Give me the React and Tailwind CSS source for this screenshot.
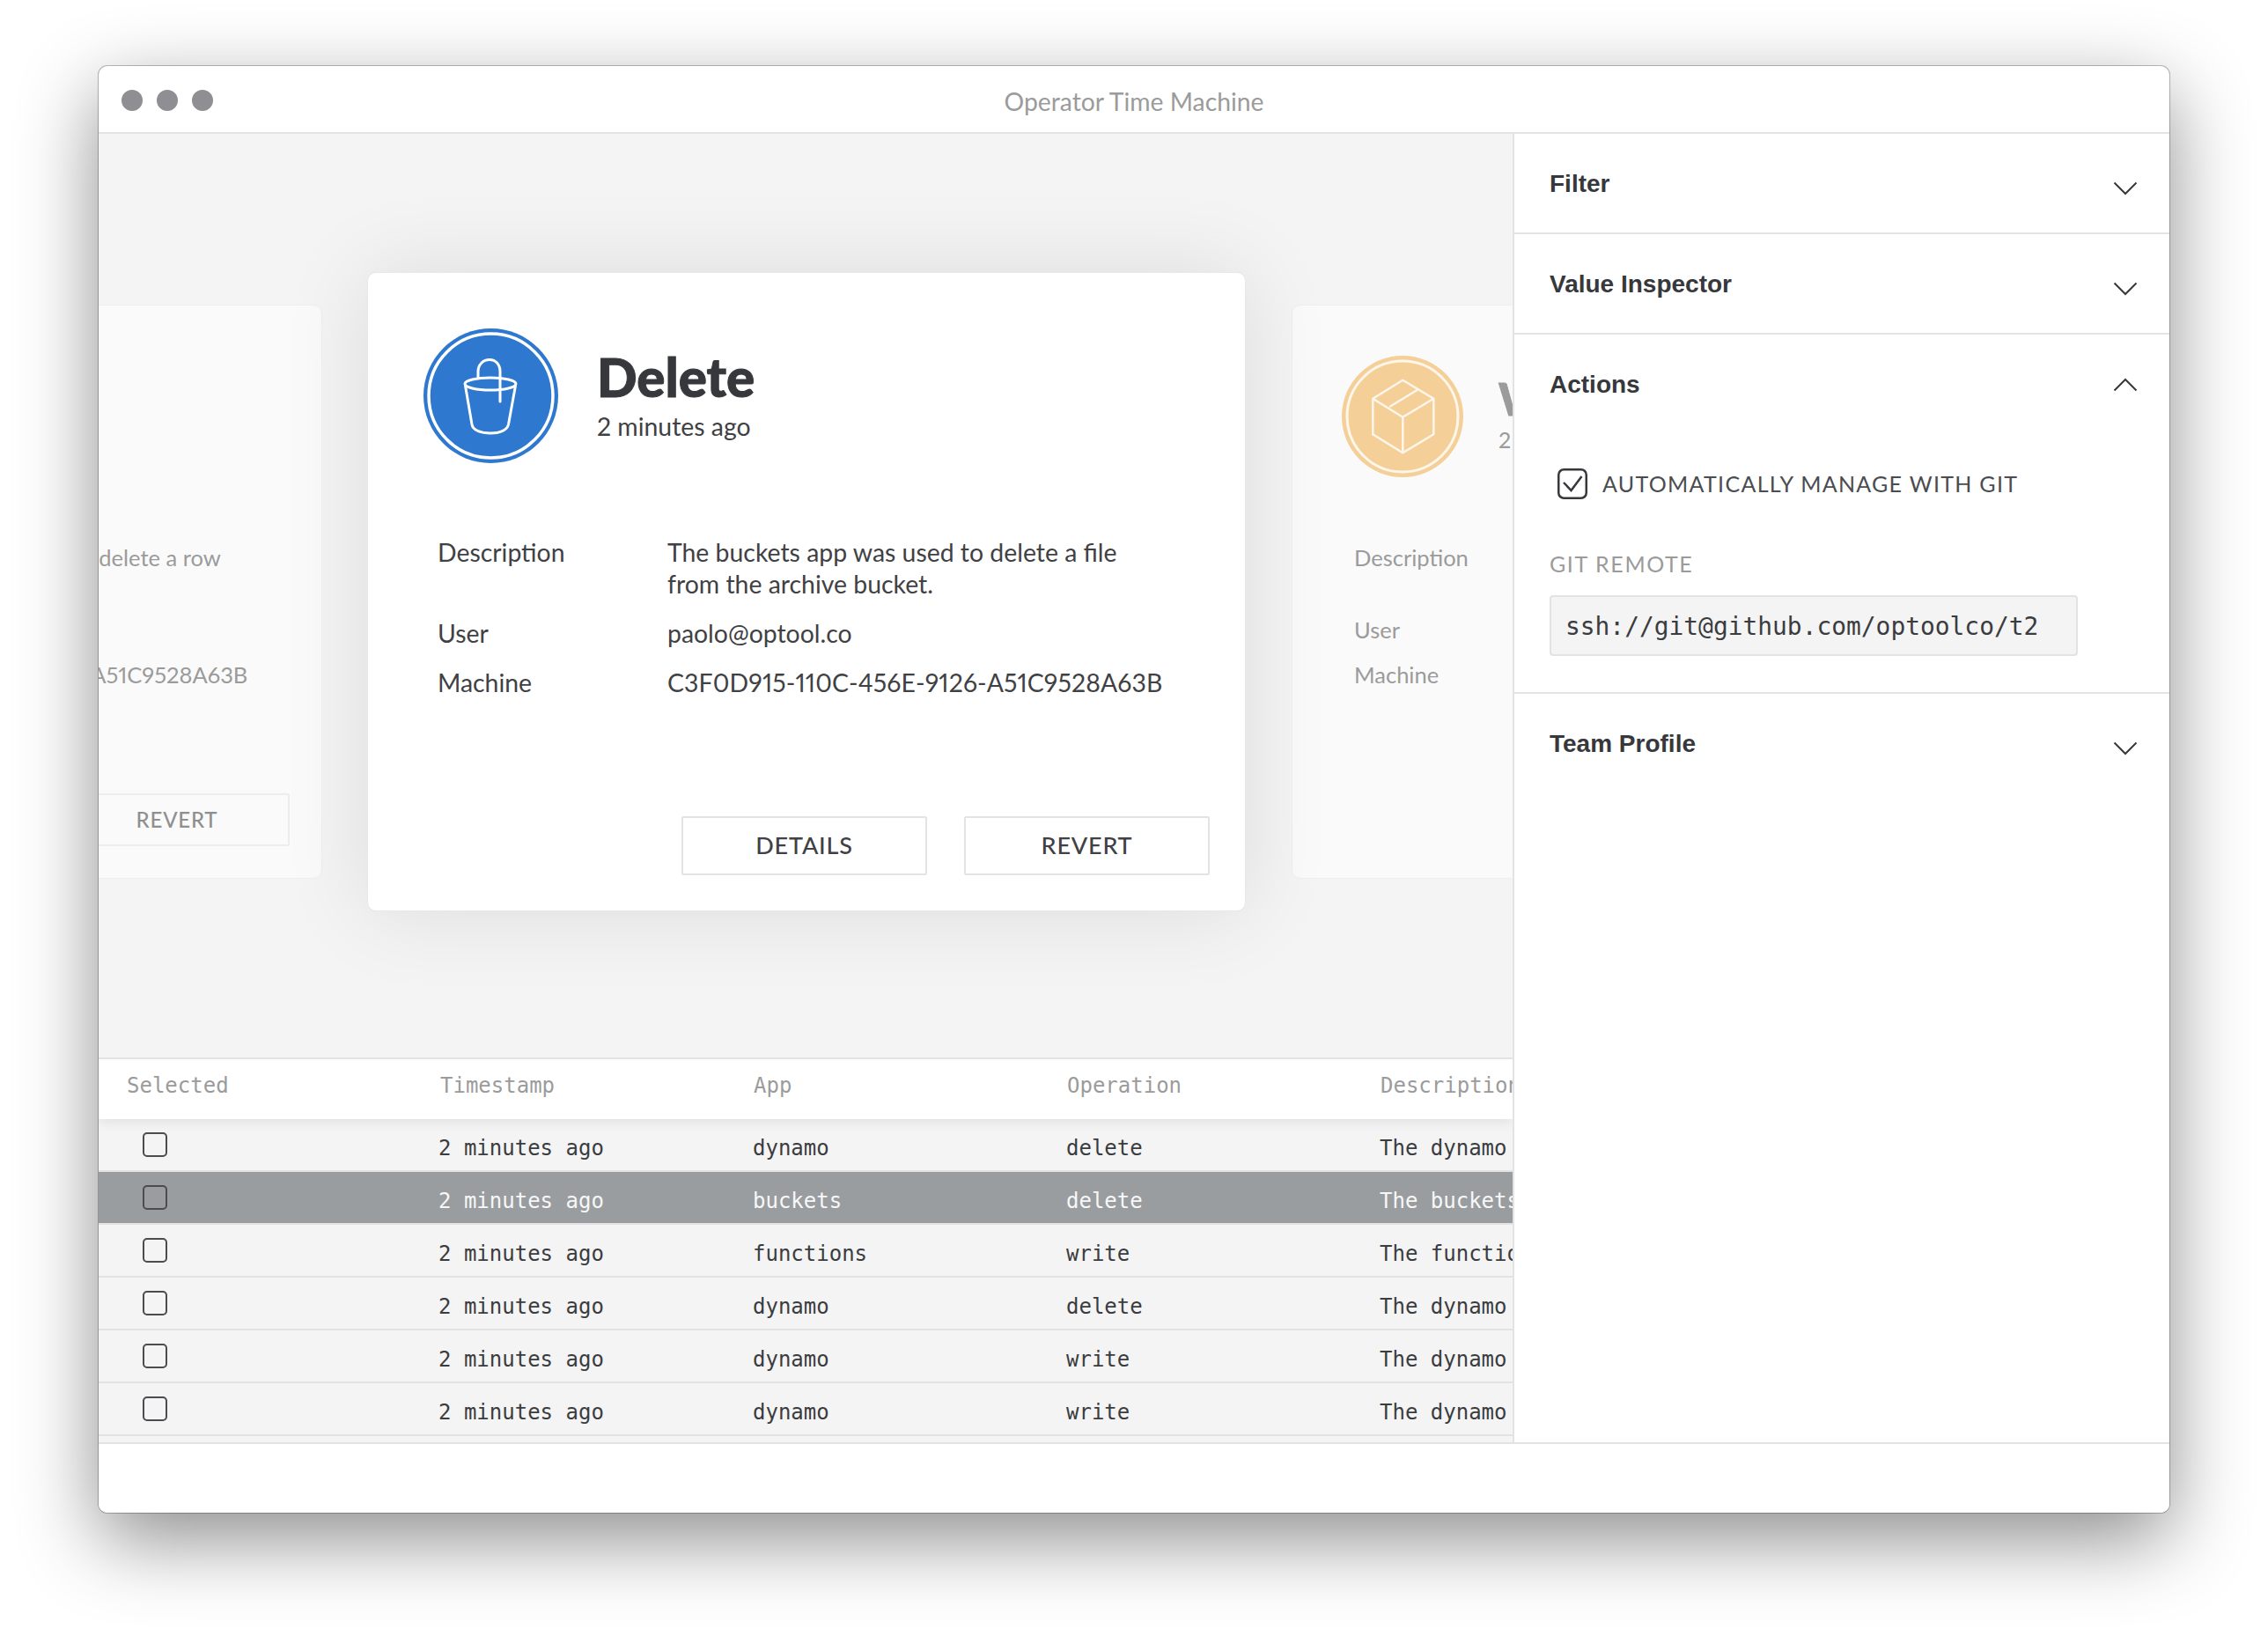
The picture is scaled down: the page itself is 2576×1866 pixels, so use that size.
import React from "react";

const rows = [
  { app: "dynamo", op: "delete", desc: "The dynamo app was used to delete a row" },
  { app: "buckets", op: "delete", desc: "The buckets app was used to delete a file", selected: true },
  { app: "functions", op: "write", desc: "The functions app was used to write a file" },
  { app: "dynamo", op: "delete", desc: "The dynamo app was used to delete a row" },
  { app: "dynamo", op: "write", desc: "The dynamo app was used to write a row" },
  { app: "dynamo", op: "write", desc: "The dynamo app was used to write a row" },
];

function BucketIcon() {
  return (
    <svg width="153" height="153" viewBox="0 0 153 153" fill="none" className="shrink-0">
      <circle cx="76.5" cy="76.5" r="76.5" fill="#2e78d0" />
      <g stroke="#fff" strokeWidth="3" strokeLinecap="round" strokeLinejoin="round">
        <circle cx="76.5" cy="76.5" r="70.5" strokeWidth="3.5" />
        <ellipse cx="76" cy="63" rx="29" ry="7" />
        <path d="M47.5 65 L55 109 C56 116 66 119 76 119 C86 119 95 116 96.5 109 L104.5 65" />
        <path d="M62 56 V49 C62 41 68 35.5 75 35.5 C82 35.5 87 41 87 49 V83" />
      </g>
    </svg>
  );
}

function BoxIcon() {
  return (
    <svg width="138" height="138" viewBox="0 0 138 138" fill="none" className="shrink-0">
      <circle cx="69" cy="69" r="69" fill="#f5cf98" />
      <g stroke="#fdf6ea" strokeWidth="2.5" strokeLinejoin="round">
        <circle cx="69" cy="69" r="63" strokeWidth="3" />
        <path d="M69.3 27.7 L104.3 48.7 V89.3 L69.3 110.3 L35.3 89.3 V48.7 Z" />
        <path d="M35.3 48.7 L69.3 69.7 L104.3 48.7 M69.3 69.7 V110.3 M54.3 58 L86 38.7" />
      </g>
    </svg>
  );
}

function Chevron({ up }) {
  return (
    <svg width="28" height="16" viewBox="0 0 28 16" fill="none" className={up ? "shrink-0" : "shrink-0 mt-[10px]"}>
      <path d={up ? "M1.5 14.5 L14 2 L26.5 14.5" : "M1.5 1.5 L14 14 L26.5 1.5"} stroke="#36383c" strokeWidth="2" />
    </svg>
  );
}

function SideCard({ icon, title, desc, cols, button }) {
  return (
    <div className="w-[854px] h-[652px] shrink-0 bg-[#fafafa] rounded-[10px] border border-[#efefef] pl-[56px] pt-[57px] pr-[36px] flex flex-col font-['Lato',sans-serif] text-[#9b9b9b] proportional-nums">
      <div className="flex items-center gap-[40px]">
        {icon}
        <div className="flex flex-col mt-[-8px]">
          <span className="text-[51px] leading-[60px] font-black [-webkit-text-stroke:1px_#9b9b9b]">{title}</span>
          <span className="text-[25px] leading-[32px]">2 minutes ago</span>
        </div>
      </div>
      <div className={"grid ml-[14px] mt-[76px] text-[25.5px] leading-[31px] gap-y-[20px] " + cols}>
        <span>Description</span>
        <span className="whitespace-pre">{desc}</span>
        <span>User</span>
        <span>paolo@optool.co</span>
        <span>Machine</span>
        <span className="whitespace-nowrap">C3F0D915-110C-456E-9126-A51C9528A63B</span>
      </div>
      {button && (
        <div className="mt-auto mb-[36px] flex justify-end">
          <div className="w-[256px] h-[60px] border-2 border-[#ededed] rounded-[2px] flex items-center justify-center text-[24px] tracking-[0.8px] font-medium text-[#8f8f8f]">
            {button}
          </div>
        </div>
      )}
    </div>
  );
}

function Section({ title, last }) {
  return (
    <div className={last ? "h-[114px] shrink-0 pl-[40px] pr-[36px] flex items-center justify-between" : "h-[114px] shrink-0 pl-[40px] pr-[36px] pt-[2px] flex items-center justify-between border-b-2 border-[#e3e3e3]"}>
      <span className="text-[28px] font-bold text-[#36383c] font-['Liberation_Sans',sans-serif]">{title}</span>
      <Chevron />
    </div>
  );
}

export default function App() {
  return (
    <div className="min-h-screen bg-white pt-[75px] pl-[112px]">
      <div className="w-[2352px] h-[1643px] bg-white rounded-[10px] overflow-hidden flex flex-col shadow-[0_30px_90px_rgba(0,0,0,0.45),0_0_0_1px_rgba(0,0,0,0.25)]">
        {/* title bar */}
        <div className="h-[77px] shrink-0 relative flex items-center justify-center border-b-2 border-[#e3e3e3]">
          <div className="absolute left-[26px] top-[27px] flex gap-[16px]">
            <div className="w-[24px] h-[24px] rounded-full bg-[#8e8e93]"></div>
            <div className="w-[24px] h-[24px] rounded-full bg-[#8e8e93]"></div>
            <div className="w-[24px] h-[24px] rounded-full bg-[#8e8e93]"></div>
          </div>
          <span className="text-[28.3px] text-[#9b9b9b] font-['Lato',sans-serif] mt-[5px]">Operator Time Machine</span>
        </div>

        <div className="flex-1 flex min-h-0">
          {/* main column */}
          <div className="flex-1 min-w-0 flex flex-col bg-[#f4f4f4]">
            <div className="h-[1049px] shrink-0 overflow-hidden flex items-center justify-center pb-[9px] pl-[3px]">
              <SideCard
                icon={<BoxIcon />}
                title="Write"
                desc={"The dynamo app was used to delete a row\nin the table."}
                cols="grid-cols-[197px_1fr]"
                button="REVERT"
              />
              <div className="relative z-10 w-[998px] h-[726px] shrink-0 ml-[51px] mr-[52px] bg-white rounded-[10px] border border-[#e8e8e8] shadow-[0_0_100px_rgba(0,0,0,0.1)] p-[40px] pt-[63px] flex flex-col font-['Lato',sans-serif] text-[#3f4144] proportional-nums">
                <div className="flex items-center gap-[44px] pl-[23px]">
                  <BucketIcon />
                  <div className="flex flex-col mt-[-6px]">
                    <span className="text-[60px] leading-[72px] font-black text-[#36383c] [-webkit-text-stroke:1px_#36383c]">Delete</span>
                    <span className="text-[28.4px] leading-[36px] mt-[2px]">2 minutes ago</span>
                  </div>
                </div>
                <div className="grid grid-cols-[261px_1fr] ml-[39px] mt-[83px] text-[28.4px] leading-[36px] gap-y-[20px]">
                  <span>Description</span>
                  <span>
                    The buckets app was used to delete a file
                    <br />
                    from the archive bucket.
                  </span>
                  <span>User</span>
                  <span>paolo@optool.co</span>
                  <span>Machine</span>
                  <span className="whitespace-nowrap tracking-[0.12px]">C3F0D915-110C-456E-9126-A51C9528A63B</span>
                </div>
                <div className="mt-auto flex justify-end gap-[42px]">
                  <div className="w-[279px] h-[67px] border-2 border-[#e3e3e3] rounded-[2px] flex items-center justify-center text-[27px] tracking-[0.8px] font-medium">DETAILS</div>
                  <div className="w-[279px] h-[67px] border-2 border-[#e3e3e3] rounded-[2px] flex items-center justify-center text-[27px] tracking-[0.8px] font-medium">REVERT</div>
                </div>
              </div>
              <SideCard
                icon={<BoxIcon />}
                title="Write"
                desc={"The dynamo app was used to write a row\nin the table."}
                cols="grid-cols-[223px_1fr]"
              />
            </div>

            {/* table */}
            <div className="flex-1 min-h-0 overflow-hidden font-['DejaVu_Sans_Mono',monospace] text-[24px]">
              <div className="h-[70px] bg-white border-t-2 border-[#e3e3e3] flex items-center pb-[9px] pl-[32px] text-[#9b9b9b] relative shadow-[0_4px_12px_rgba(0,0,0,0.08)] whitespace-nowrap">
                <span className="w-[356px] shrink-0">Selected</span>
                <span className="w-[356px] shrink-0">Timestamp</span>
                <span className="w-[356px] shrink-0">App</span>
                <span className="w-[356px] shrink-0">Operation</span>
                <span className="w-[356px] shrink-0">Description</span>
              </div>
              {rows.map((row, i) => (
                <div
                  key={i}
                  className={
                    row.selected
                      ? "h-[60px] flex items-center pl-[50px] pt-[8px] bg-[#9a9d9f] text-[#f7f7f7] border-b-2 border-[#e3e3e3] whitespace-nowrap"
                      : "h-[60px] flex items-center pl-[50px] pt-[8px] text-[#3a3c40] border-b-2 border-[#e3e3e3] whitespace-nowrap"
                  }
                >
                  <div className="w-[336px] shrink-0 mt-[-9px]">
                    <div className="w-[28px] h-[28px] rounded-[5px] border-2 border-[#4a4c50]"></div>
                  </div>
                  <span className="w-[357px] shrink-0">2 minutes ago</span>
                  <span className="w-[356px] shrink-0">{row.app}</span>
                  <span className="w-[356px] shrink-0">{row.op}</span>
                  <span className="shrink-0">{row.desc}</span>
                </div>
              ))}
            </div>
          </div>

          {/* sidebar */}
          <div className="w-[746px] shrink-0 border-l-2 border-[#e3e3e3] bg-white flex flex-col">
            <Section title="Filter" />
            <Section title="Value Inspector" />
            <div className="h-[408px] shrink-0 border-b-2 border-[#e3e3e3] pl-[40px] pr-[36px] flex flex-col">
              <div className="h-[114px] flex items-center justify-between shrink-0">
                <span className="text-[28px] font-bold text-[#36383c] font-['Liberation_Sans',sans-serif]">Actions</span>
                <Chevron up />
              </div>
              <div className="flex items-center gap-[17px] ml-[9px] mt-[37px] font-['Lato',sans-serif] text-[25px] tracking-[1.3px] text-[#4a4c50]">
                <svg width="34" height="35" viewBox="0 0 34 35" fill="none" className="shrink-0">
                  <rect x="1.25" y="1.25" width="31.5" height="32.5" rx="6" stroke="#36383c" strokeWidth="2.5" />
                  <path d="M7 16 L15.5 25 L27.5 9" stroke="#36383c" strokeWidth="2.5" />
                </svg>
                <span>AUTOMATICALLY MANAGE WITH GIT</span>
              </div>
              <span className="mt-[55px] font-['Lato',sans-serif] text-[25px] leading-[32px] tracking-[1.6px] text-[#9b9b9b]">GIT REMOTE</span>
              <div className="mt-[20px] w-[600px] h-[69px] bg-[#f4f4f4] border-2 border-[#e3e3e3] rounded-[4px] pl-[16px] pt-[3px] flex items-center font-['DejaVu_Sans_Mono',monospace] text-[27.9px] text-[#3a3c40]">
                ssh://git@github.com/optoolco/t2
              </div>
            </div>
            <Section title="Team Profile" last />
          </div>
        </div>

        {/* status bar */}
        <div className="h-[80px] shrink-0 bg-white border-t-2 border-[#e3e3e3]"></div>
      </div>
    </div>
  );
}
